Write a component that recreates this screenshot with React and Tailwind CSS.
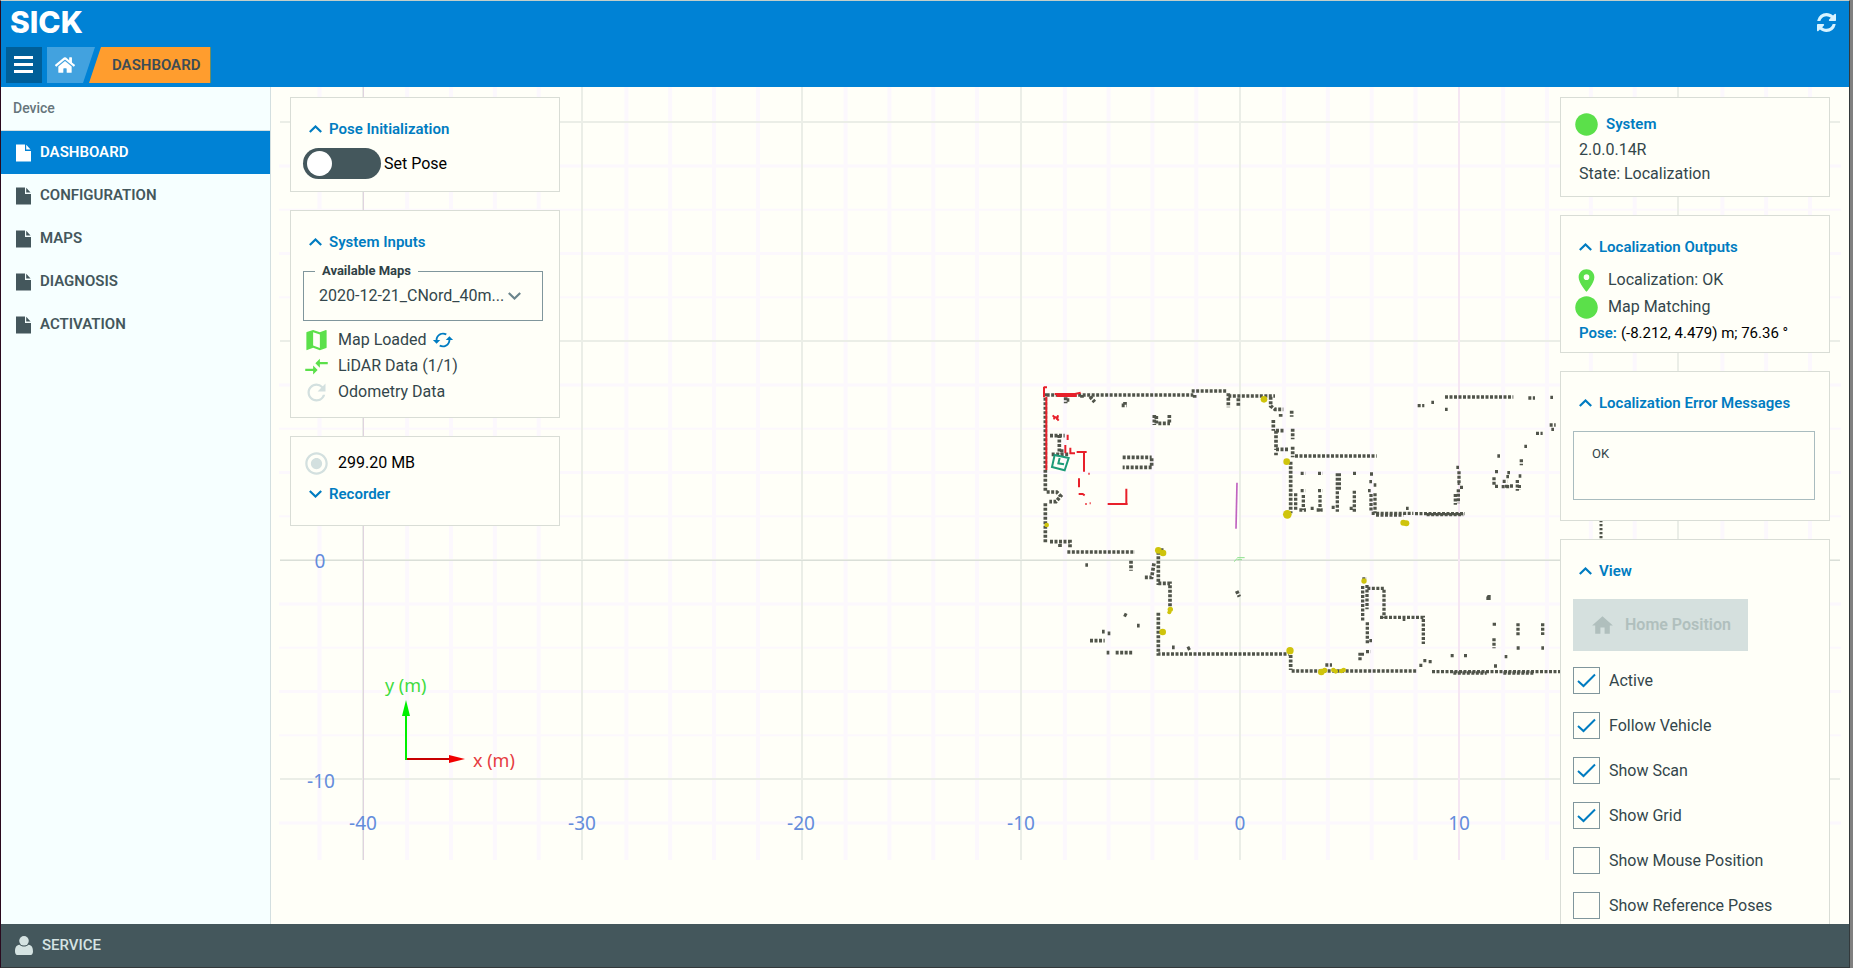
import React from "react";
import { FaHome } from "react-icons/fa";
import {
  MdCached,
  MdCircle,
  MdCompareArrows,
  MdHome,
  MdMap,
  MdPlace,
  MdRadioButtonChecked,
  MdRefresh,
} from "react-icons/md";

const NAV_ITEMS = ["DASHBOARD", "CONFIGURATION", "MAPS", "DIAGNOSIS", "ACTIVATION"];

const VIEW_OPTIONS = [
  ["Active", true],
  ["Follow Vehicle", true],
  ["Show Scan", true],
  ["Show Grid", true],
  ["Show Mouse Position", false],
  ["Show Reference Poses", false],
];

function FileIcon() {
  return (
    <svg viewBox="0 0 15 18" className="h-[18px] w-[15px] shrink-0" fill="currentColor" aria-hidden="true">
      <path d="M0 .5h9V7h6v10.5H0z" />
      <path d="M10.2.8 14.6 5.6h-4.4z" />
    </svg>
  );
}

function UserIcon() {
  return (
    <svg viewBox="0 0 18 19" className="h-[19px] w-[18px]" fill="currentColor" aria-hidden="true">
      <path d="M4.4 8.8C1.2 9.2 0 11.6 0 15.4 0 17.8 1.2 19 3 19H15C16.8 19 18 17.8 18 15.4 18 11.6 16.8 9.2 13.6 8.8 12.3 10 10.8 10.6 9 10.6S5.7 10 4.4 8.8z" />
      <circle cx="9" cy="4.8" r="4.8" />
    </svg>
  );
}

function ReloadIcon() {
  return (
    <svg viewBox="0 128 1536 1536" className="size-[19px]" fill="currentColor" aria-hidden="true">
      <path d="M1511 1056q0 5-1 7-64 268-268 434.500t-478 166.500q-146 0-282.500-55t-243.500-157l-129 129q-19 19-45 19t-45-19-19-45v-448q0-26 19-45t45-19h448q26 0 45 19t19 45-19 45l-137 137q71 66 161 102t187 36q134 0 250-65t186-179q11-17 53-117 8-23 30-23h192q13 0 22.500 9.500t9.500 22.500zm25-800v448q0 26-19 45t-45 19h-448q-26 0-45-19t-19-45 19-45l138-138q-148-137-349-137-134 0-250 65t-186 179q-11 17-53 117-8 23-30 23h-199q-13 0-22.500-9.500t-9.500-22.500v-7q65-268 270-434.500t480-166.500q146 0 284 55.500t245 156.500l130-129q19-19 45-19t45 19 19 45z" />
    </svg>
  );
}

function Chevron({ down = false }) {
  return (
    <svg viewBox="0 0 13 8" className="h-2 w-[13px] shrink-0" fill="none" stroke="currentColor" strokeWidth="2.2" aria-hidden="true">
      <path d={down ? "M.8 1l5.700 5.500L12.200 1" : "M.8 7l5.700-5.500L12.200 7"} />
    </svg>
  );
}

function Panel({ className = "", children }) {
  return <section className={`border border-[#d9ddd6] bg-[#fffff8] px-3 ${className}`}>{children}</section>;
}

function PanelTitle({ children, down = false }) {
  return (
    <h2>
      <button type="button" className="flex h-5 items-center gap-[7px] pl-[6px] text-[15px] font-semibold text-[#007cc1]">
        <Chevron down={down} />
        {children}
      </button>
    </h2>
  );
}

function StatusRow({ icon, children }) {
  return (
    <div className="flex h-[26px] items-center gap-2">
      <span className="flex w-[27px] shrink-0 justify-center">{icon}</span>
      <span className="flex items-center gap-[5px]">{children}</span>
    </div>
  );
}

const WALLS_WEST =
  "M80 75H520M515 63H620M625 70V112M655 85V112M625 78H765M524 75v8M752 80V108L765 118H790M782 132v8M815 122V140M760 150V182M768 182V240M768 182h25M818 176v32M768 238h40M818 230V262M812 275V430M768 248v8M137 82v18M140 90h8M186 75v8M210 80L224 96M305 106h15M315 96v8M403 135v30M409 138v26M415 160h35M448 135v25M76 70V365M76 400V520M80 366H110L122 378L108 395H88M90 515H150v18M120 522v10M142 546H345M90 197H134M118 195V250M125 238v15M95 253H145M308 262H395M395 265V292H308M333 572v30M196 585h8M415 545V645M402 580L395 622H370M425 535v8M415 640H450V712M650 663L658 680M415 728V852H806M456 832h8M502 837l10-5M312 733l10 5M351 767h8M246 785h8M263 790h8M210 812h44M260 848h8M287 848H337M812 855V900";

const WALLS_EAST =
  "M45 258H290M62 310h14M62 362h14M70 375v45M47 370V420M58 420h20M114 310h14M114 362h14M120 375V425M92 415h12M110 420h18M172 310V425M178 310v50M155 412h12M219 310h10M223 362V425M209 415h12M270 312h10M268 335h8M281 345h8M264 362h8M273 372V425M285 370V430M275 430H400M288 435H370M378 415h8M405 431H555M440 434H550M529 292h8M537 304V345M533 340h6M540 352h10M535 358V400M526 372v32M495 81H700M745 84h20M811 82h8M413 107h20M454 97h8M495 118h8M809 165h18M814 178h8M768 190h20M733 229h8M652 258h8M724 268v18M645 305h12M642 322v26M645 349h12M682 308h8M679 320h8M668 334h14M665 350h24M680 344v10M716 318h8M712 330V362M718 345v14M690 348h10M247 627h14M248 648V752M261 645V718M262 655H312V745M300 742H430V822M368 748h8M262 757V822M268 812h8M258 845h14M240 848V872M247 848v10M35 903H410M136 885h20M418 886h12M430 872h12M446 875h10M456 905H840M520 909H620M670 909H760M512 857h10M552 857h10M642 888h12M674 860h8M643 758v10M642 805V835M714 760V798M710 834h10M788 760V795M784 834h8";

const RED_SCAN =
  "M72 50V82M72 52h9M79 80V300M104 72H165L182 68M110 78h60M98 136l8 8M106 140l10 12M104 138l-2 10M114 136l-3 14M143 194v16M136 225v25M151 233v17h14M170 246H200M192 246V305M177 325v27M176 372h12l6 4M196 402h4M209 400h3M205 311h4M263 402H323M319 356V400";

const YELLOW_WEST = [[732, 88, 10], [800, 275, 10], [802, 433, 13], [80, 465, 7], [415, 541, 10], [429, 549, 10], [451, 718, 8], [448, 727, 6], [428, 786, 10], [810, 842, 11]];
const YELLOW_EAST = [[370, 458, 9], [379, 460, 9], [252, 633, 8], [124, 906, 10], [134, 901, 8], [160, 900, 7], [167, 904, 7], [184, 903, 7], [191, 900, 7]];

const MINOR_X = Array.from({ length: 36 }, (_, i) => 319.5 + i * 43.84).filter((x, i) => i % 5 !== 1 && x < 1840);
const MAJOR_X = [363, 582, 802, 1021, 1240, 1678];
const MINOR_Y = Array.from({ length: 18 }, (_, i) => 822.9 - i * 43.8).filter((y, i) => i % 5 !== 1 && y > 88);
const MAJOR_Y = [122, 341, 560, 779];

function MapCanvas() {
  return (
    <svg
      viewBox="271 87 1578 837"
      preserveAspectRatio="xMinYMin slice"
      className="size-full [grid-area:1/1]"
      fontFamily="'Noto Sans', sans-serif"
      fontSize="19"
      role="img"
      aria-label="Localization map"
    >
      <g stroke="#fcf8fd" strokeWidth="4">
        {MINOR_X.map((x) => (
          <path key={x} d={`M${x} 87V860`} />
        ))}
        {MINOR_Y.map((y, i) => (
          <path key={y} d={`M279 ${y}H1841`} strokeWidth={i % 2 ? 2 : 3} />
        ))}
      </g>
      <g stroke="#ebeee7" strokeWidth="2">
        {MAJOR_X.map((x) => (
          <path key={x} d={`M${x} 87V860`} />
        ))}
        {MAJOR_Y.map((y) => (
          <path key={y} d={`M280 ${y}H1840`} />
        ))}
      </g>
      <path d="M280 560.500H1840" stroke="#dadfd8" />
      <path d="M363.500 87V860" stroke="#e0d3df" />
      <path d="M1459 87V860" stroke="#f5e6f3" strokeWidth="2" />

      <g transform="translate(1020 370) scale(.33333)" fill="none">
        <path d={WALLS_WEST} stroke="#50544a" strokeWidth="11" strokeDasharray="9 4.5" />
        <path d={RED_SCAN} stroke="#e8202a" strokeWidth="6" />
        <path d="M104 255l42 9-12 37-38-10zM119 264l-4 16 17 3" stroke="#1c9b78" strokeWidth="6" />
        <path d="M651 338 648 476" stroke="#c063c0" strokeWidth="5" />
        <path d="M642 575l10-10M652 563h22M652 569h14" stroke="#8be08a" strokeWidth="3" />
        <g fill="#cfc40c">
          {YELLOW_WEST.map(([x, y, r]) => (
            <circle key={`${x}-${y}`} cx={x} cy={y} r={r} />
          ))}
        </g>
      </g>
      <g transform="translate(1280 370) scale(.33333)" fill="none">
        <path d={WALLS_EAST} stroke="#50544a" strokeWidth="10" strokeDasharray="9 4.5" />
        <path d="M619 690v-9l4-6h9v15z" fill="#50544a" />
        <path d="M963 450V510" stroke="#50544a" strokeWidth="9" strokeDasharray="7 5" />
        <g fill="#cfc40c">
          {YELLOW_EAST.map(([x, y, r]) => (
            <circle key={`${x}-${y}`} cx={x} cy={y} r={r} />
          ))}
        </g>
      </g>

      <path d="M406 759H450" stroke="#c80000" strokeWidth="2" />
      <path d="M449 755l16 4-16 4z" fill="#f00000" />
      <path d="M406 760V715" stroke="#00f000" strokeWidth="2" />
      <path d="M402 716l4-16 4 16z" fill="#00f000" />
      <text x="385" y="692" fill="#3fdc3f" fontSize="18">y (m)</text>
      <text x="473" y="767" fill="#e63c41" fontSize="18">x (m)</text>

      <g fill="#648cdc" textAnchor="middle">
        <text x="320" y="568">0</text>
        <text x="321" y="788">-10</text>
        <text x="363" y="830">-40</text>
        <text x="582" y="830">-30</text>
        <text x="801" y="830">-20</text>
        <text x="1021" y="830">-10</text>
        <text x="1240" y="830">0</text>
        <text x="1459" y="830">10</text>
      </g>
    </svg>
  );
}

function Header() {
  return (
    <header className="flex h-[86px] shrink-0 flex-col justify-between bg-[#0082d5] pt-[3px] pb-1 text-white">
      <div className="flex h-9 items-center justify-between pr-[13px] pl-[9px]">
        <a href="#home" className="font-['Inter',sans-serif] text-[30px] leading-9 font-extrabold">SICK</a>
        <button type="button" aria-label="Reload" className="text-[#d8f3ff]">
          <ReloadIcon />
        </button>
      </div>
      <nav aria-label="Breadcrumb" className="flex h-9 gap-[5px] pl-[5px]">
        <button type="button" aria-label="Toggle menu" className="flex w-9 flex-col items-center justify-center gap-1 bg-[#005f99] pr-px pb-[2px]">
          <span className="h-[3px] w-[19px] bg-white" />
          <span className="h-[3px] w-[19px] bg-white" />
          <span className="h-[3px] w-[19px] bg-white" />
        </button>
        <a href="#home" aria-label="Home" className="flex w-12 items-center bg-[#42a2df] pb-px pl-2 [clip-path:polygon(0_0,100%_0,calc(100%_-_12px)_100%,0_100%)]">
          <FaHome className="size-5" />
        </a>
        <a href="#dashboard" className="-ml-[11px] flex w-[122px] items-center border-r border-[#6b8c62] bg-[#ff9d2e] pl-[23px] text-[15px] font-semibold text-[#3c4c55] [clip-path:polygon(12px_0,100%_0,100%_100%,0_100%)]">
          DASHBOARD
        </a>
      </nav>
    </header>
  );
}

function Sidebar() {
  return (
    <aside className="w-[270px] shrink-0 border-r border-[#d3dfe0] bg-[#f6ffff]">
      <div className="flex h-11 items-center border-b border-[#d3dfe0] pl-3 text-[14px] font-medium text-[#66757b]">Device</div>
      <nav aria-label="Device">
        {NAV_ITEMS.map((item, i) => (
          <a
            key={item}
            href={`#${item.toLowerCase()}`}
            className={`flex h-[43px] items-center gap-[9px] pl-[15px] text-[15px] font-semibold ${
              i === 0 ? "bg-[#0082d5] text-white" : "text-[#44575c]"
            }`}
          >
            <FileIcon />
            {item}
          </a>
        ))}
      </nav>
    </aside>
  );
}

function LeftPanels() {
  return (
    <div className="flex w-[270px] flex-col gap-[18px]">
      <Panel className="pt-[21px] pb-3">
        <PanelTitle>Pose Initialization</PanelTitle>
        <label className="mt-[9px] flex items-center gap-[3px] text-black">
          <input
            type="checkbox"
            role="switch"
            className="flex h-[31px] w-[78px] appearance-none items-center rounded-full bg-[#44575c] px-1 before:size-[25px] before:rounded-full before:bg-white checked:justify-end checked:bg-[#007cc1]"
          />
          Set Pose
        </label>
      </Panel>

      <Panel className="pt-[21px] pb-3">
        <PanelTitle>System Inputs</PanelTitle>
        <fieldset className="mt-[10px] mb-[6px] w-[240px] border border-[#80969c] pl-[15px]">
          <legend className="-ml-1 px-[7px] text-[13px] leading-[18px] font-bold text-[#2f4146]">
            <label htmlFor="available-maps">Available Maps</label>
          </legend>
          <div className="flex h-10 items-start pr-[21px]">
            <select id="available-maps" className="h-8 min-w-0 flex-1 appearance-none bg-transparent text-[16px]">
              <option>2020-12-21_CNord_40m...</option>
            </select>
            <span className="pointer-events-none pt-3 text-[#6b858c]">
              <Chevron down />
            </span>
          </div>
        </fieldset>
        <StatusRow icon={<MdMap className="size-7 text-[#5be04a]" />}>
          Map Loaded
          <button type="button" aria-label="Reload map" className="text-[#007cc1]">
            <MdCached className="size-[22px]" />
          </button>
        </StatusRow>
        <StatusRow icon={<MdCompareArrows className="size-[27px] text-[#5be04a]" />}>LiDAR Data (1/1)</StatusRow>
        <StatusRow icon={<MdRefresh className="size-[27px] text-[#d3e0df]" />}>Odometry Data</StatusRow>
      </Panel>

      <Panel className="pt-[13px] pb-[21px]">
        <StatusRow icon={<MdRadioButtonChecked className="size-[27px] text-[#d3e0df]" />}>
          <span className="text-black">299.20 MB</span>
        </StatusRow>
        <div className="mt-2">
          <PanelTitle down>Recorder</PanelTitle>
        </div>
      </Panel>
    </div>
  );
}

function RightPanels() {
  return (
    <div className="flex w-[270px] flex-col gap-[18px]">
      <Panel className="pt-[13px] pb-[10px]">
        <div className="flex h-[27px] items-center gap-[6px]">
          <MdCircle className="size-[27px] text-[#5be04a]" />
          <h2 className="text-[15px] font-semibold text-[#007cc1]">System</h2>
        </div>
        <p className="pl-[6px]">2.0.0.14R</p>
        <p className="pl-[6px]">State: Localization</p>
      </Panel>

      <Panel className="pt-[21px] pb-[6px]">
        <PanelTitle>Localization Outputs</PanelTitle>
        <div className="mt-[10px] flex flex-col gap-px">
          <StatusRow icon={<MdPlace className="size-[27px] text-[#5be04a]" />}>Localization: OK</StatusRow>
          <StatusRow icon={<MdCircle className="size-[27px] text-[#5be04a]" />}>Map Matching</StatusRow>
          <p className="flex h-[25px] items-center gap-1 pl-[6px] text-[15px] text-black">
            <span className="font-semibold text-[#007cc1]">Pose:</span>
            (-8.212, 4.479) m; 76.36 °
          </p>
        </div>
      </Panel>

      <Panel className="pt-[21px] pb-5">
        <PanelTitle>Localization Error Messages</PanelTitle>
        <textarea
          readOnly
          aria-label="Localization error messages"
          defaultValue="OK"
          className="mt-[18px] block h-[69px] w-[242px] resize-none border border-[#a9bcbf] bg-transparent px-[18px] py-3 text-[13px] leading-5"
        />
      </Panel>

      <Panel className="pt-[21px] pb-5">
        <PanelTitle>View</PanelTitle>
        <button type="button" disabled className="mt-[18px] flex h-[52px] w-[175px] items-center justify-center gap-[10px] bg-[#d5e0de] text-[16px] font-semibold text-[#b0bfbd]">
          <MdHome className="size-[25px]" />
          Home Position
        </button>
        <div className="mt-4 flex flex-col gap-[18px]">
          {VIEW_OPTIONS.map(([label, checked]) => (
            <label key={label} className="flex h-[27px] items-center gap-[9px]">
              <span className="grid">
                <input
                  type="checkbox"
                  defaultChecked={checked}
                  className="peer size-[27px] appearance-none border border-[#80969c] [grid-area:1/1]"
                />
                <svg
                  viewBox="0 0 27 27"
                  className="pointer-events-none invisible size-[27px] text-[#007cc1] [grid-area:1/1] peer-checked:visible"
                  fill="none"
                  stroke="currentColor"
                  strokeWidth="2"
                  aria-hidden="true"
                >
                  <path d="M5 14l5.500 5L22 7.500" />
                </svg>
              </span>
              {label}
            </label>
          ))}
        </div>
      </Panel>
    </div>
  );
}

export default function App() {
  return (
    <div className="flex h-screen bg-[#808080] pr-[3px] font-['Roboto',sans-serif] text-[16px] text-[#33464b]">
      <div className="flex min-w-0 flex-1 flex-col border border-t-[#c3cec9] border-r-[#33393b] border-b-[#33393b] border-l-[#2a0a1e]">
        <Header />
        <div className="flex min-h-0 flex-1">
          <Sidebar />
          <main className="grid min-w-0 flex-1 grid-cols-1 grid-rows-1 overflow-hidden bg-[#fffff8]">
            <MapCanvas />
            <div className="z-10 flex min-h-0 items-start justify-between px-[19px] pt-[10px] [grid-area:1/1]">
              <LeftPanels />
              <RightPanels />
            </div>
          </main>
        </div>
        <footer className="flex h-[43px] shrink-0 items-center gap-[9px] bg-[#44575c] pl-[14px] text-[15px] font-medium text-[#d5e3e2]">
          <UserIcon />
          SERVICE
        </footer>
      </div>
    </div>
  );
}
